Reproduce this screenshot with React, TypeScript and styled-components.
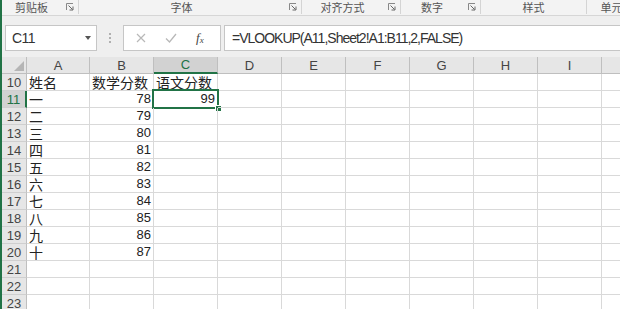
import styled, { createGlobalStyle } from 'styled-components';

const GlobalStyle = createGlobalStyle`
  html, body {
    margin: 0;
    padding: 0;
    background: #fff;
  }
  body {
    font-family: 'Liberation Sans', 'Noto Sans CJK SC', sans-serif;
  }
`;

const GREEN = '#217346';

const Window = styled.div`
  width: 618px;
  height: 309px;
  overflow: hidden;
  border-left: 2px solid ${GREEN};
  background: #fff;
`;

// ribbon group labels
const Ribbon = styled.div`
  display: flex;
  height: 15px;
  background: #f3f3f3;
  border-bottom: 1px solid #d6d6d6;
`;

const Group = styled.div<{ $w: number }>`
  display: flex;
  align-items: center;
  flex: 0 0 ${p => p.$w}px;
  height: 14px;
  border-right: 1px solid #d4d4d4;
`;

const GroupLabel = styled.span`
  flex: 1;
  text-align: center;
  font-family: 'Noto Sans CJK SC', sans-serif;
  font-size: 11px;
  line-height: 15px;
  margin-top: 1px;
  color: #555;
  white-space: nowrap;
`;

const Launcher = styled.span`
  display: flex;
  align-items: center;
  justify-content: center;
  flex: 0 0 17px;
  height: 14px;
`;

// formula bar
const FormulaArea = styled.div`
  display: flex;
  align-items: flex-start;
  height: 32px;
  padding-top: 9px;
  background: #efefef;
`;

const NameBox = styled.div`
  display: flex;
  align-items: center;
  justify-content: space-between;
  box-sizing: border-box;
  width: 92px;
  height: 26px;
  margin-left: 3px;
  padding: 0 5px 0 6px;
  background: #fff;
  border: 1px solid #c6c6c6;
  font-size: 14px;
  letter-spacing: -0.6px;
  color: #333;
`;

const Caret = styled.span`
  width: 0;
  height: 0;
  border-left: 3.5px solid transparent;
  border-right: 3.5px solid transparent;
  border-top: 4px solid #555;
`;

const Grip = styled.div`
  display: flex;
  flex-direction: column;
  align-items: center;
  justify-content: center;
  gap: 2px;
  width: 26px;
  height: 26px;
  span {
    width: 2px;
    height: 2px;
    background: #b0b0b0;
  }
`;

const FxBox = styled.div`
  display: flex;
  align-items: center;
  gap: 19px;
  box-sizing: border-box;
  width: 98px;
  height: 26px;
  padding-left: 12px;
  background: #fff;
  border: 1px solid #c6c6c6;
`;

const FxLabel = styled.span`
  font-family: 'Liberation Serif', serif;
  font-style: italic;
  font-size: 13px;
  color: #444;
  sub {
    font-size: 9px;
    vertical-align: -1px;
  }
`;

const FormulaInput = styled.div`
  display: flex;
  align-items: center;
  box-sizing: border-box;
  flex: 1;
  height: 26px;
  margin-left: 3px;
  margin-right: -10px;
  padding-left: 7px;
  background: #fff;
  border: 1px solid #c6c6c6;
  font-size: 14px;
  letter-spacing: -1px;
  color: #333;
  white-space: nowrap;
`;

// sheet grid
const Sheet = styled.div`
  display: flex;
  flex-direction: column;
`;

const Row = styled.div`
  display: flex;
  height: 17px;
`;

const HeadCell = styled.div<{ $w: number; $sel?: boolean }>`
  position: relative;
  flex: 0 0 ${p => p.$w}px;
  box-sizing: border-box;
  display: flex;
  align-items: center;
  justify-content: center;
  background: ${p => (p.$sel ? '#d2d2d2' : '#e6e6e6')};
  color: ${p => (p.$sel ? GREEN : '#444')};
  border-right: 1px solid #bfbfbf;
  border-bottom: ${p => (p.$sel ? `2px solid ${GREEN}` : '1px solid #bfbfbf')};
  font-size: 13px;
`;

const RowHead = styled.div<{ $sel?: boolean }>`
  flex: 0 0 25px;
  box-sizing: border-box;
  display: flex;
  align-items: center;
  justify-content: center;
  background: ${p => (p.$sel ? '#d2d2d2' : '#e6e6e6')};
  color: ${p => (p.$sel ? GREEN : '#444')};
  border-right: ${p => (p.$sel ? `2px solid ${GREEN}` : '1px solid #bfbfbf')};
  border-bottom: 1px solid #cfcfcf;
  font-size: 13px;
`;

const Corner = styled.div`
  flex: 0 0 25px;
  box-sizing: border-box;
  display: flex;
  align-items: flex-end;
  justify-content: flex-end;
  padding: 0 2px 2px 0;
  background: #e6e6e6;
  border-right: 1px solid #bfbfbf;
  border-bottom: 1px solid #bfbfbf;
`;

const Cell = styled.div<{ $w: number; $num?: boolean }>`
  position: relative;
  flex: 0 0 ${p => p.$w}px;
  box-sizing: border-box;
  display: flex;
  align-items: flex-end;
  justify-content: ${p => (p.$num ? 'flex-end' : 'flex-start')};
  padding: 0 2px 0 2px;
  border-right: 1px solid #d9d9d9;
  border-bottom: 1px solid #d9d9d9;
  font-family: ${p =>
    p.$num ? "'Liberation Sans', sans-serif" : "'Noto Sans CJK SC', sans-serif"};
  font-size: ${p => (p.$num ? 13 : 14)}px;
  line-height: 16px;
  color: #222;
  white-space: nowrap;
`;

const ActiveFrame = styled.div`
  position: absolute;
  top: -2px;
  left: -2px;
  right: -2px;
  bottom: -2px;
  border: 2px solid ${GREEN};
  pointer-events: none;
`;

const FillHandle = styled.div`
  position: absolute;
  right: -5px;
  bottom: -5px;
  width: 5px;
  height: 5px;
  background: ${GREEN};
  border: 1px solid #fff;
`;

const groups = [
  { w: 76, label: '剪贴板', launcher: true },
  { w: 222, label: '字体', launcher: true },
  { w: 98, label: '对齐方式', launcher: true },
  { w: 79, label: '数字', launcher: true },
  { w: 105, label: '样式', launcher: false },
  { w: 60, label: '单元格', launcher: false },
];

const columns = ['A', 'B', 'C', 'D', 'E', 'F', 'G', 'H', 'I', 'J'];
const widthOf = (i: number) => (i === 0 ? 63 : 64);

const rows: { n: number; a?: string; b?: string; c?: string; bNum?: boolean; cNum?: boolean }[] = [
  { n: 10, a: '姓名', b: '数学分数', c: '语文分数' },
  { n: 11, a: '一', b: '78', c: '99', bNum: true, cNum: true },
  { n: 12, a: '二', b: '79', bNum: true },
  { n: 13, a: '三', b: '80', bNum: true },
  { n: 14, a: '四', b: '81', bNum: true },
  { n: 15, a: '五', b: '82', bNum: true },
  { n: 16, a: '六', b: '83', bNum: true },
  { n: 17, a: '七', b: '84', bNum: true },
  { n: 18, a: '八', b: '85', bNum: true },
  { n: 19, a: '九', b: '86', bNum: true },
  { n: 20, a: '十', b: '87', bNum: true },
  { n: 21 },
  { n: 22 },
  { n: 23 },
];

const LauncherIcon = () => (
  <svg width="8" height="8" viewBox="0 0 8 8">
    <path d="M0.5 7V0.5H7" fill="none" stroke="#888" strokeWidth="1" />
    <path d="M2.5 2.5L6.5 6.5M3.5 7H7V3.5" fill="none" stroke="#666" strokeWidth="1" />
  </svg>
);

const App = () => {
  return (
    <Window>
      <GlobalStyle />
      <Ribbon>
        {groups.map(g => (
          <Group key={g.label} $w={g.w}>
            <GroupLabel>{g.label}</GroupLabel>
            {g.launcher && (
              <Launcher>
                <LauncherIcon />
              </Launcher>
            )}
          </Group>
        ))}
      </Ribbon>

      <FormulaArea>
        <NameBox>
          C11
          <Caret />
        </NameBox>
        <Grip>
          <span />
          <span />
          <span />
        </Grip>
        <FxBox>
          <svg width="10" height="10" viewBox="0 0 10 10">
            <path d="M1 1L9 9M9 1L1 9" stroke="#b8b8b8" strokeWidth="1.2" />
          </svg>
          <svg width="12" height="10" viewBox="0 0 12 10">
            <path d="M1 5.5L4.5 9L11 1" fill="none" stroke="#b8b8b8" strokeWidth="1.3" />
          </svg>
          <FxLabel>
            f<sub>x</sub>
          </FxLabel>
        </FxBox>
        <FormulaInput>=VLOOKUP(A11,Sheet2!A1:B11,2,FALSE)</FormulaInput>
      </FormulaArea>

      <Sheet>
        <Row>
          <Corner>
            <svg width="10" height="10" viewBox="0 0 10 10">
              <path d="M10 0V10H0Z" fill="#b5b5b5" />
            </svg>
          </Corner>
          {columns.map((c, i) => (
            <HeadCell key={c} $w={widthOf(i)} $sel={c === 'C'}>
              {c}
            </HeadCell>
          ))}
        </Row>
        {rows.map(r => (
          <Row key={r.n}>
            <RowHead $sel={r.n === 11}>{r.n}</RowHead>
            {columns.map((c, i) => {
              const value = c === 'A' ? r.a : c === 'B' ? r.b : c === 'C' ? r.c : undefined;
              const num = c === 'B' ? r.bNum : c === 'C' ? r.cNum : false;
              const active = c === 'C' && r.n === 11;
              return (
                <Cell key={c} $w={widthOf(i)} $num={num}>
                  {value}
                  {active && (
                    <ActiveFrame>
                      <FillHandle />
                    </ActiveFrame>
                  )}
                </Cell>
              );
            })}
          </Row>
        ))}
      </Sheet>
    </Window>
  );
};

export default App;
